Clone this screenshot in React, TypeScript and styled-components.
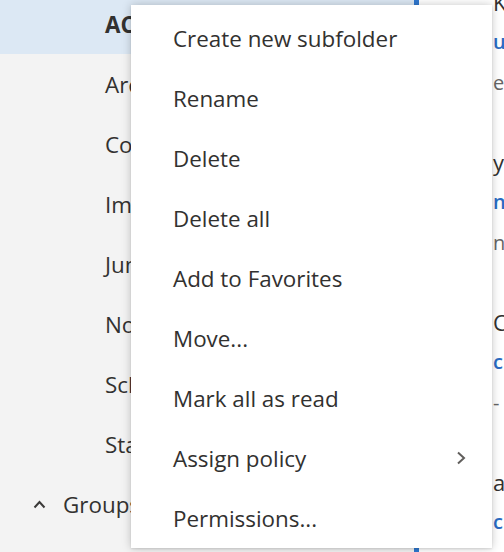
import styled, { createGlobalStyle } from 'styled-components';

const GlobalStyle = createGlobalStyle`
  html, body {
    margin: 0;
    padding: 0;
    overflow: hidden;
  }
  body {
    font-family: "Open Sans", "Noto Sans", sans-serif;
    color: #323130;
  }
`;

const Shell = styled.div`
  display: flex;
  width: 504px;
  height: 552px;
  overflow: hidden;
  position: relative;
  background: #ffffff;
`;

const FolderPane = styled.div`
  width: 414px;
  flex-shrink: 0;
  background: #f3f3f3;
`;

const FolderList = styled.ul`
  list-style: none;
  margin: -6px 0 0;
  padding: 0;
`;

type FolderRowProps = {
  $selected?: boolean;
};

const FolderRow = styled.li<FolderRowProps>`
  height: 60px;
  display: flex;
  align-items: center;
  padding-left: 105px;
  font-size: 22.4px;
  white-space: nowrap;
  color: #323130;
  font-weight: ${(p) => (p.$selected ? 700 : 400)};
  background: ${(p) => (p.$selected ? '#dce8f4' : 'transparent')};
`;

const GroupHeader = styled.li`
  height: 60px;
  display: flex;
  align-items: center;
  gap: 17px;
  padding-left: 33px;
  font-size: 22.4px;
  color: #323130;

  svg {
    flex-shrink: 0;
  }
`;

const FocusBar = styled.div`
  width: 5px;
  flex-shrink: 0;
  background: #2f78d0;
`;

const MessagePane = styled.div`
  flex: 1;
  min-width: 0;
  background: #ffffff;
  overflow: hidden;
`;

const MessageList = styled.div`
  margin-top: -18px;
`;

const MessageItem = styled.div`
  height: 160px;
  padding-left: 74px;
  white-space: nowrap;
`;

const Sender = styled.div`
  line-height: 40px;
  font-size: 22px;
  color: #323130;
`;

const Subject = styled.div`
  line-height: 40px;
  font-size: 20px;
  font-weight: 600;
  color: #2a6cc4;
`;

const Preview = styled.div`
  line-height: 42px;
  font-size: 20px;
  color: #666666;
`;

const Menu = styled.ul`
  position: absolute;
  left: 131px;
  top: 5px;
  width: 361px;
  margin: 0;
  padding: 3px 0 0;
  list-style: none;
  background: #ffffff;
  box-shadow: 0 0 9px rgba(0, 0, 0, 0.22), 0 1px 2px rgba(0, 0, 0, 0.1);
`;

const MenuItem = styled.li`
  height: 60px;
  display: flex;
  align-items: center;
  justify-content: space-between;
  padding: 0 26px 0 42px;
  font-size: 22.4px;
  color: #323130;
  white-space: nowrap;

  svg {
    color: #605e5c;
  }
`;

const folders = [
  { name: 'ACME', selected: true },
  { name: 'Archive' },
  { name: 'Conversation History' },
  { name: 'Important' },
  { name: 'Junk Email' },
  { name: 'Notes' },
  { name: 'Scheduled' },
  { name: 'Starred' },
];

const messages = [
  { sender: 'Kr', subject: 'u', preview: 'el' },
  { sender: 'y', subject: 'n', preview: 'ne' },
  { sender: 'C', subject: 'c', preview: '-' },
  { sender: 'al', subject: 'c', preview: '' },
];

const menuItems = [
  'Create new subfolder',
  'Rename',
  'Delete',
  'Delete all',
  'Add to Favorites',
  'Move...',
  'Mark all as read',
  'Assign policy',
  'Permissions...',
];

const ChevronUp = () => (
  <svg width="13" height="9" viewBox="0 0 13 9" fill="none">
    <polyline points="1.5,7.5 6.5,2 11.5,7.5" stroke="#3b3a39" strokeWidth="2" />
  </svg>
);

const ChevronRight = () => (
  <svg width="10" height="14" viewBox="0 0 10 14" fill="none">
    <polyline points="2,1.5 8,7 2,12.5" stroke="currentColor" strokeWidth="2" />
  </svg>
);

export default function App() {
  return (
    <>
      <GlobalStyle />
      <Shell>
        <FolderPane>
          <FolderList>
            {folders.map((f) => (
              <FolderRow key={f.name} $selected={f.selected}>
                {f.name}
              </FolderRow>
            ))}
            <GroupHeader>
              <ChevronUp />
              Groups
            </GroupHeader>
          </FolderList>
        </FolderPane>
        <FocusBar />
        <MessagePane>
          <MessageList>
            {messages.map((m, i) => (
              <MessageItem key={i}>
                <Sender>{m.sender}</Sender>
                <Subject>{m.subject}</Subject>
                <Preview>{m.preview}</Preview>
              </MessageItem>
            ))}
          </MessageList>
        </MessagePane>
        <Menu>
          {menuItems.map((label) => (
            <MenuItem key={label}>
              {label}
              {label === 'Assign policy' && <ChevronRight />}
            </MenuItem>
          ))}
        </Menu>
      </Shell>
    </>
  );
}
